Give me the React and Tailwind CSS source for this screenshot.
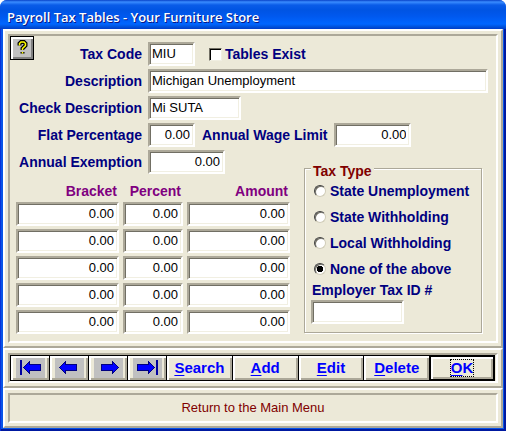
import React, { useState } from "react";

const face = "bg-[#ece9d8]";
const raised = "border-2 border-t-white border-l-white border-r-[#aca899] border-b-[#aca899]";
const sunken = "border-2 border-t-[#aca899] border-l-[#aca899] border-r-white border-b-white";
const bevel = "shadow-[inset_2px_2px_0_#fff,inset_-2px_-2px_0_#aca899]";
const labelText = "text-[14px] leading-4 font-bold text-[#000080] whitespace-nowrap";

function Panel({ children, className = "" }) {
  return (
    <div className={`${face} ${raised} p-[3px]`}>
      <div className={`${sunken} ${className}`}>{children}</div>
    </div>
  );
}

function Box({ className = "", ...props }) {
  return (
    <input
      className={`h-6 min-w-0 bg-white border-2 border-t-[#aca899] border-l-[#aca899] border-r-white border-b-white shadow-[inset_1px_1px_0_#716f64,inset_-1px_-1px_0_#f1efe2] pl-[2px] pr-[3px] pb-[2px] text-[13px] leading-4 text-black outline-none rounded-none ${className}`}
      {...props}
    />
  );
}

function Row({ id, label, children }) {
  return (
    <div className="flex items-center h-6">
      <label htmlFor={id} className={`${labelText} w-33 shrink-0 text-right mr-[6px]`}>
        {label}
      </label>
      {children}
    </div>
  );
}

function Arrow({ flip, bar }) {
  return (
    <svg width="29" height="20" viewBox="0 0 29 20" shapeRendering="crispEdges" aria-hidden="true">
      <rect width="29" height="20" fill="#c0c0c0" />
      <g transform={flip ? "translate(29 0) scale(-1 1)" : undefined}>
        {bar && <rect x="4" y="2" width="2" height="15" fill="#0000a0" />}
        <path
          d="M7.5 9.5 L13.5 3.5 V6.5 H24.5 V12.5 H13.5 V15.5 Z"
          transform={bar ? undefined : "translate(-3 0)"}
          fill="#0000ff"
          stroke="#000080"
        />
      </g>
    </svg>
  );
}

function NavButton({ label, flip, bar }) {
  return (
    <button
      type="button"
      aria-label={label}
      className={`${bevel} ${face} h-[26px] border-y border-l border-black flex items-center justify-center p-[2px]`}
    >
      <Arrow flip={flip} bar={bar} />
    </button>
  );
}

function TextButton({ text, isDefault }) {
  return (
    <button
      type="button"
      className={`${bevel} ${face} h-[26px] ${isDefault ? "border-2" : "border-y border-l"} border-black flex items-center justify-center text-[15px] leading-4 font-bold text-[#0000ff]`}
    >
      <span className={isDefault ? "outline-1 outline-dotted outline-black" : ""}>
        <span className="underline underline-offset-2 [text-decoration-thickness:1px]">{text[0]}</span>
        {text.slice(1)}
      </span>
    </button>
  );
}

const questionMark = "M2.5 5.5 V3.5 L4 2 H7 L8.5 3.5 V5.5 L5.5 8.5 V10 M5.5 12 V13.5";

const columns = [
  { name: "Bracket", width: "w-[103px]" },
  { name: "Percent", width: "w-[60px]" },
  { name: "Amount", width: "w-[103px]" },
];
const taxTypes = ["State Unemployment", "State Withholding", "Local Withholding", "None of the above"];

export default function App() {
  const [type, setType] = useState("None of the above");
  return (
    <div className="bg-[#0855e8] rounded-t-[7px] overflow-hidden font-['Liberation_Sans',Arial,sans-serif]">
      <header className="h-[29px] flex items-center px-[7px] bg-[linear-gradient(#0842c8_0px,#3a8cff_2px,#0a5ce8_5px,#0054e3_10px,#0058ee_16px,#0066ff_24px,#0050d8_27px,#003dc8_29px)]">
        <h1 className="font-['Open_Sans',sans-serif] text-[13px] leading-4 font-semibold text-white whitespace-nowrap [text-shadow:1px_1px_0_#0a1883] mt-1">
          Payroll Tax Tables - Your Furniture Store
        </h1>
      </header>

      <main className="px-[3px] pb-[3px] shadow-[inset_1px_0_0_#0831d9,inset_-2px_-2px_0_#0019a0]">
        <Panel>
          <div className="flex flex-col gap-[3px] pr-2">
            <div className="flex items-start">
              <button
                type="button"
                aria-label="Help"
                className="size-6 shrink-0 bg-[#c0c0c0] border border-black shadow-[inset_2px_2px_0_#fff,inset_-2px_-2px_0_#808080] flex items-center justify-center"
              >
                <svg width="11" height="16" viewBox="0 0 11 16" aria-hidden="true">
                  <path d={questionMark} fill="none" stroke="#000" strokeWidth="4" />
                  <path d={questionMark} fill="none" stroke="#ffff00" strokeWidth="1.5" />
                </svg>
              </button>
              <div className="flex flex-1 items-center h-6 mt-[6px]">
                <label htmlFor="code" className={`${labelText} w-27 shrink-0 text-right mr-[6px]`}>
                  Tax Code
                </label>
                <Box id="code" className="w-[47px]" defaultValue="MIU" />
                <label className={`${labelText} flex items-center gap-[3px] ml-[14px]`}>
                  <input
                    type="checkbox"
                    className="appearance-none size-[13px] bg-white border border-t-[#716f64] border-l-[#716f64] border-r-[#f1efe2] border-b-[#f1efe2] shadow-[inset_1px_1px_0_#000] checked:bg-black"
                  />
                  Tables Exist
                </label>
              </div>
            </div>
            <Row id="desc" label="Description">
              <Box id="desc" className="flex-1" defaultValue="Michigan Unemployment" />
            </Row>
            <Row id="check" label="Check Description">
              <Box id="check" className="w-[93px]" defaultValue="Mi SUTA" />
            </Row>
            <Row id="flat" label="Flat Percentage">
              <Box id="flat" className="w-[47px] text-right" defaultValue="0.00" />
              <label htmlFor="limit" className={`${labelText} mx-[7px]`}>
                Annual Wage Limit
              </label>
              <Box id="limit" className="w-[77px] text-right" defaultValue="0.00" />
            </Row>
          </div>

          <div className="flex items-start justify-between pt-[3px] pr-[14px] pb-1">
            <div>
              <Row id="exempt" label="Annual Exemption">
                <Box id="exempt" className="w-[77px] text-right" defaultValue="0.00" />
              </Row>
              <table className="border-collapse mt-[9px] ml-[6px]">
                <thead>
                  <tr>
                    {columns.map((c) => (
                      <th key={c.name} scope="col" className="h-[19px] p-0 pr-[6px] text-right align-top text-[14px] leading-4 font-bold text-[#800080]">
                        {c.name}
                      </th>
                    ))}
                  </tr>
                </thead>
                <tbody>
                  {[1, 2, 3, 4, 5].map((r) => (
                    <tr key={r}>
                      {columns.map((c) => (
                        <td key={c.name} className="p-0 pr-1 pb-[3px]">
                          <Box aria-label={`${c.name} ${r}`} className={`${c.width} block text-right`} defaultValue="0.00" />
                        </td>
                      ))}
                    </tr>
                  ))}
                </tbody>
              </table>
            </div>

            <fieldset className="w-[178px] mt-[7px] border border-[#aca899] outline-0 border-r-[#aca899] px-[6px] pb-2 shadow-[1px_1px_0_#fff,inset_1px_1px_0_#fff]">
              <legend className={`${face} px-[2px] pt-[6px] text-[14px] leading-4 font-bold text-[#800000]`}>Tax Type</legend>
              <div className="flex flex-col gap-[10px] pl-[3px] pt-1">
                {taxTypes.map((t) => (
                  <label key={t} className={`${labelText} flex items-center gap-1`}>
                    <input
                      type="radio"
                      name="taxType"
                      checked={type === t}
                      onChange={() => setType(t)}
                      className="appearance-none size-3 shrink-0 rounded-full bg-white border border-t-[#404040] border-l-[#404040] border-r-[#d0ccb8] border-b-[#d0ccb8] shadow-[inset_1px_1px_0_#716f64] checked:bg-[radial-gradient(circle,#000_3px,#fff_3px)]"
                    />
                    {t}
                  </label>
                ))}
              </div>
              <label htmlFor="taxid" className={`${labelText} block mt-[5px] pl-px`}>
                Employer Tax ID #
              </label>
              <Box id="taxid" className="block w-[93px] mt-[2px]" />
            </fieldset>
          </div>
        </Panel>

        <Panel className="pr-px">
          <nav className="grid grid-cols-[39px_39px_39px_39px_repeat(5,1fr)]">
            <NavButton label="First record" bar />
            <NavButton label="Previous record" />
            <NavButton label="Next record" flip />
            <NavButton label="Last record" flip bar />
            <TextButton text="Search" />
            <TextButton text="Add" />
            <TextButton text="Edit" />
            <TextButton text="Delete" />
            <TextButton text="OK" isDefault />
          </nav>
        </Panel>

        <Panel>
          <p className="py-[5px] text-center text-[13px] leading-4 text-[#800000]">Return to the Main Menu</p>
        </Panel>
      </main>
    </div>
  );
}
